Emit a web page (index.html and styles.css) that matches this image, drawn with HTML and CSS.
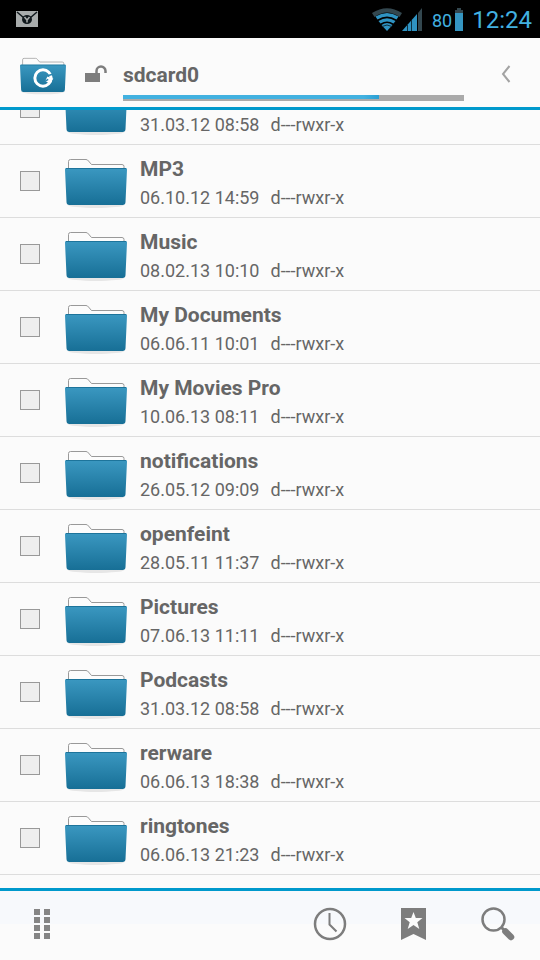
FILE: index.html
```html
<!DOCTYPE html>
<html lang="en">
<head>
<meta charset="utf-8">
<meta name="viewport" content="width=device-width, initial-scale=1">
<title>sdcard0</title>
<link rel="stylesheet" href="styles.css">
</head>
<body>

<!-- shared folder icon -->
<svg class="defs" aria-hidden="true">
<defs>
<linearGradient id="blue" x1="0" y1="0" x2="0" y2="1">
<stop offset="0" stop-color="#3b98c1"/>
<stop offset="1" stop-color="#176f96"/>
</linearGradient>
<symbol id="folder" viewBox="0 0 62 52">
<ellipse cx="31" cy="47" rx="28" ry="3" fill="#e6e6e6"/>
<path d="M3.500 14V3.500q0-2 2-2H21q1.500 0 2.500 1.500l3 3.500H57q2 0 2 2V14z" fill="#fcfcfc" stroke="#999"/>
<path d="M1 10h60q1 0 1 1.500l-1.500 32.500q0 3-3 3h-53q-3 0-3-3L0 11.500q0-1.500 1-1.500z" fill="url(#blue)"/>
<path d="M1 10.500h60" stroke="#1d749b"/>
</symbol>
</defs>
</svg>

<div class="screen">
<div class="status">
<svg class="mail" width="22" height="16" viewBox="0 0 22 16" aria-hidden="true">
<path d="M0 0h22v16H0z" fill="#a8acac"/>
<path d="M1 1l7 6M21 1l-7 6" stroke="#10181c" stroke-width="1.500"/>
<ellipse cx="11" cy="8.500" rx="5" ry="4.500" fill="#10181c"/>
<path d="M8.500 6l2.500 3 2.500-3M11 9v2.500" stroke="#a8acac" stroke-width="1.500" fill="none"/>
</svg>
<svg class="wifi" width="30" height="23" viewBox="0 0 30 23" aria-hidden="true">
<path d="M0 5Q15-4.500 30 5l-2.500 4Q15 0 2.500 9z" fill="#33474f"/>
<path d="M3.500 8.500Q15 1.500 26.500 8.500l-2 3Q15 5.500 5.500 11.500z" fill="#2f93c2"/>
<path d="M6.500 13Q15 7.500 23.500 13l-2 2.500Q15 11.500 8.500 15.500z" fill="#2f93c2"/>
<path d="M9.500 17Q15 13 20.500 17L15 23z" fill="#2f93c2"/>
<path d="M10 18.500q5-3 10 0" fill="none" stroke="#0d3040"/>
</svg>
<svg class="signal" width="21" height="23" viewBox="0 0 21 23" aria-hidden="true">
<path d="M0 23L15 6v17z" fill="#2f93c2"/>
<path d="M16 5l4-5v23h-4z" fill="#33474f"/>
<path d="M5.500 16v7M9.500 12v11" stroke="#0d3040"/>
</svg>
<span class="percent">80</span>
<svg class="battery" width="8" height="23" viewBox="0 0 8 23" aria-hidden="true">
<path d="M2 0h4v2h2v3H0V2h2z" fill="#33474f"/>
<path d="M0 5h8v18H0z" fill="#3595c1"/>
</svg>
<span class="clock">12:24</span>
</div>

<header class="bar">
<svg class="home" width="46" height="39" viewBox="0 0 62 52" aria-hidden="true">
<use href="#folder"/>
<circle cx="31" cy="28" r="11" fill="none" stroke="#fff" stroke-width="4"/>
<path d="M37 26l8 3-6 6-5-3z" fill="#fff"/>
<path d="M37 25l7-2M33 33l5-3" stroke="#2b86af" stroke-width="2"/>
</svg>
<svg class="lock" width="22" height="18" viewBox="0 0 22 18" aria-hidden="true">
<path d="M0 8h15v9H0z" fill="#7d7d7d"/>
<path d="M11.500 9V6a4.500 4.500 0 0 1 9 0v2" fill="none" stroke="#7d7d7d" stroke-width="2.500"/>
</svg>
<div class="volume">
<h1>sdcard0</h1>
<div class="usage"><div class="used"></div></div>
</div>
<button class="back" type="button" aria-label="Back">
<svg width="10" height="18" viewBox="0 0 10 18"><path d="M8.500 1L2 9l6.500 8" fill="none" stroke="#a3a3a3" stroke-width="2"/></svg>
</button>
</header>

<main class="files">
<ul class="list">
<li>
<input type="checkbox" id="f0">
<svg class="folder"><use href="#folder"/></svg>
<label for="f0"><b></b><span>31.03.12 08:58</span><span>d---rwxr-x</span></label>
</li>
<li>
<input type="checkbox" id="f1">
<svg class="folder"><use href="#folder"/></svg>
<label for="f1"><b>MP3</b><span>06.10.12 14:59</span><span>d---rwxr-x</span></label>
</li>
<li>
<input type="checkbox" id="f2">
<svg class="folder"><use href="#folder"/></svg>
<label for="f2"><b>Music</b><span>08.02.13 10:10</span><span>d---rwxr-x</span></label>
</li>
<li>
<input type="checkbox" id="f3">
<svg class="folder"><use href="#folder"/></svg>
<label for="f3"><b>My Documents</b><span>06.06.11 10:01</span><span>d---rwxr-x</span></label>
</li>
<li>
<input type="checkbox" id="f4">
<svg class="folder"><use href="#folder"/></svg>
<label for="f4"><b>My Movies Pro</b><span>10.06.13 08:11</span><span>d---rwxr-x</span></label>
</li>
<li>
<input type="checkbox" id="f5">
<svg class="folder"><use href="#folder"/></svg>
<label for="f5"><b>notifications</b><span>26.05.12 09:09</span><span>d---rwxr-x</span></label>
</li>
<li>
<input type="checkbox" id="f6">
<svg class="folder"><use href="#folder"/></svg>
<label for="f6"><b>openfeint</b><span>28.05.11 11:37</span><span>d---rwxr-x</span></label>
</li>
<li>
<input type="checkbox" id="f7">
<svg class="folder"><use href="#folder"/></svg>
<label for="f7"><b>Pictures</b><span>07.06.13 11:11</span><span>d---rwxr-x</span></label>
</li>
<li>
<input type="checkbox" id="f8">
<svg class="folder"><use href="#folder"/></svg>
<label for="f8"><b>Podcasts</b><span>31.03.12 08:58</span><span>d---rwxr-x</span></label>
</li>
<li>
<input type="checkbox" id="f9">
<svg class="folder"><use href="#folder"/></svg>
<label for="f9"><b>rerware</b><span>06.06.13 18:38</span><span>d---rwxr-x</span></label>
</li>
<li>
<input type="checkbox" id="f10">
<svg class="folder"><use href="#folder"/></svg>
<label for="f10"><b>ringtones</b><span>06.06.13 21:23</span><span>d---rwxr-x</span></label>
</li>
</ul>
</main>

<footer class="tools">
<button class="menu" type="button" aria-label="Menu">
<svg width="16" height="30" viewBox="0 0 16 30"><path d="M0 0h6v6H0zM10 0h6v6h-6zM0 8h6v6H0zM10 8h6v6h-6zM0 16h6v6H0zM10 16h6v6h-6zM0 24h6v6H0zM10 24h6v6h-6z" fill="#858585"/></svg>
</button>
<button type="button" aria-label="History">
<svg width="34" height="34" viewBox="0 0 34 34" fill="none" stroke="#7d7d7d"><circle cx="17" cy="17" r="15" stroke-width="2.500"/><path d="M16.500 6v11.500l7 7" stroke-width="2"/></svg>
</button>
<button type="button" aria-label="Bookmarks">
<svg width="34" height="34" viewBox="0 0 34 34"><path d="M4 1h25v32l-12.500-6L4 33z" fill="#7d7d7d"/><path d="M16.500 5l2.300 6h6.700l-5.200 4.200 2 6.800-5.800-4-5.800 4 2-6.800L7.500 11h6.700z" fill="#fbfbfb"/></svg>
</button>
<button type="button" aria-label="Search">
<svg width="34" height="34" viewBox="0 0 34 34" fill="none" stroke="#7d7d7d"><circle cx="12.500" cy="12.500" r="11" stroke-width="2.500"/><path d="M20 20l4 4" stroke-width="3"/><path d="M24.500 24.500l5.500 5.500" stroke-width="6.500" stroke-linecap="round"/></svg>
</button>
</footer>
</div>
</body>
</html>
```

FILE: styles.css
```css
*{
box-sizing:border-box;
}
body{
margin:0;
background:#fbfbfb;
color:#666;
font-family:Roboto,"Noto Sans",sans-serif;
}
svg{
display:block;
flex:none;
}
button{
padding:0;
border:0;
background:none;
}
.defs{
position:absolute;
width:0;
height:0;
}
.screen{
display:flex;
flex-direction:column;
height:100vh;
overflow:hidden;
}

/* status bar */
.status{
display:flex;
align-items:center;
flex:none;
height:38px;
padding:0 8px 0 16px;
background:#000;
color:#42b1e0;
}
.mail{
margin-right:auto;
}
.signal{
margin-right:9px;
}
.percent{
padding-top:2px;
font-size:18px;
}
.battery{
margin:0 9px 0 3px;
}
.clock{
padding-top:2px;
font-size:24px;
}

/* current volume */
.bar{
display:flex;
align-items:center;
flex:none;
height:72px;
padding:2px 0 0 20px;
border-bottom:3px solid #0099cc;
}
.home{
margin-top:6px;
}
.lock{
margin:0 16px 0 19px;
}
.volume{
flex:1;
align-self:flex-end;
padding-bottom:6px;
}
h1{
margin:0 0 6px;
font-size:21px;
line-height:28px;
}
.usage{
height:6px;
background:#aaa;
}
.used{
width:75%;
height:4px;
background:linear-gradient(to right,#42b1e0 94%,#2a9fd3);
}
.back{
display:flex;
align-items:center;
justify-content:center;
width:76px;
height:60px;
padding-left:8px;
}

/* file list, scrolled part way into the first row */
.files{
flex:1;
min-height:0;
overflow:hidden;
}
.list{
margin:-38px 0 0;
padding:0;
list-style:none;
}
.list li{
display:flex;
align-items:center;
height:73px;
padding-left:20px;
border-bottom:1px solid #ddd;
}
.list input{
appearance:none;
width:20px;
height:20px;
margin:0 25px 0 0;
border:1px solid #999;
background:#eee;
}
.list input:checked{
background:#42b1e0;
}
.folder{
width:62px;
height:52px;
margin:6px 13px 0 0;
}
.list label{
flex:1;
padding-top:6px;
font-size:18px;
line-height:30px;
}
.list b{
display:block;
height:28px;
font-size:21px;
line-height:28px;
}
.list span{
margin-right:11px;
}

/* bottom tools */
.tools{
display:flex;
align-items:center;
flex:none;
height:72px;
padding:0 25px 3px 34px;
border-top:3px solid #0099cc;
background:linear-gradient(#f7f9fc 33px,#fbfbfb 33px);
}
.tools button{
margin-left:50px;
}
.tools .menu{
margin:0 auto 0 0;
}
```
